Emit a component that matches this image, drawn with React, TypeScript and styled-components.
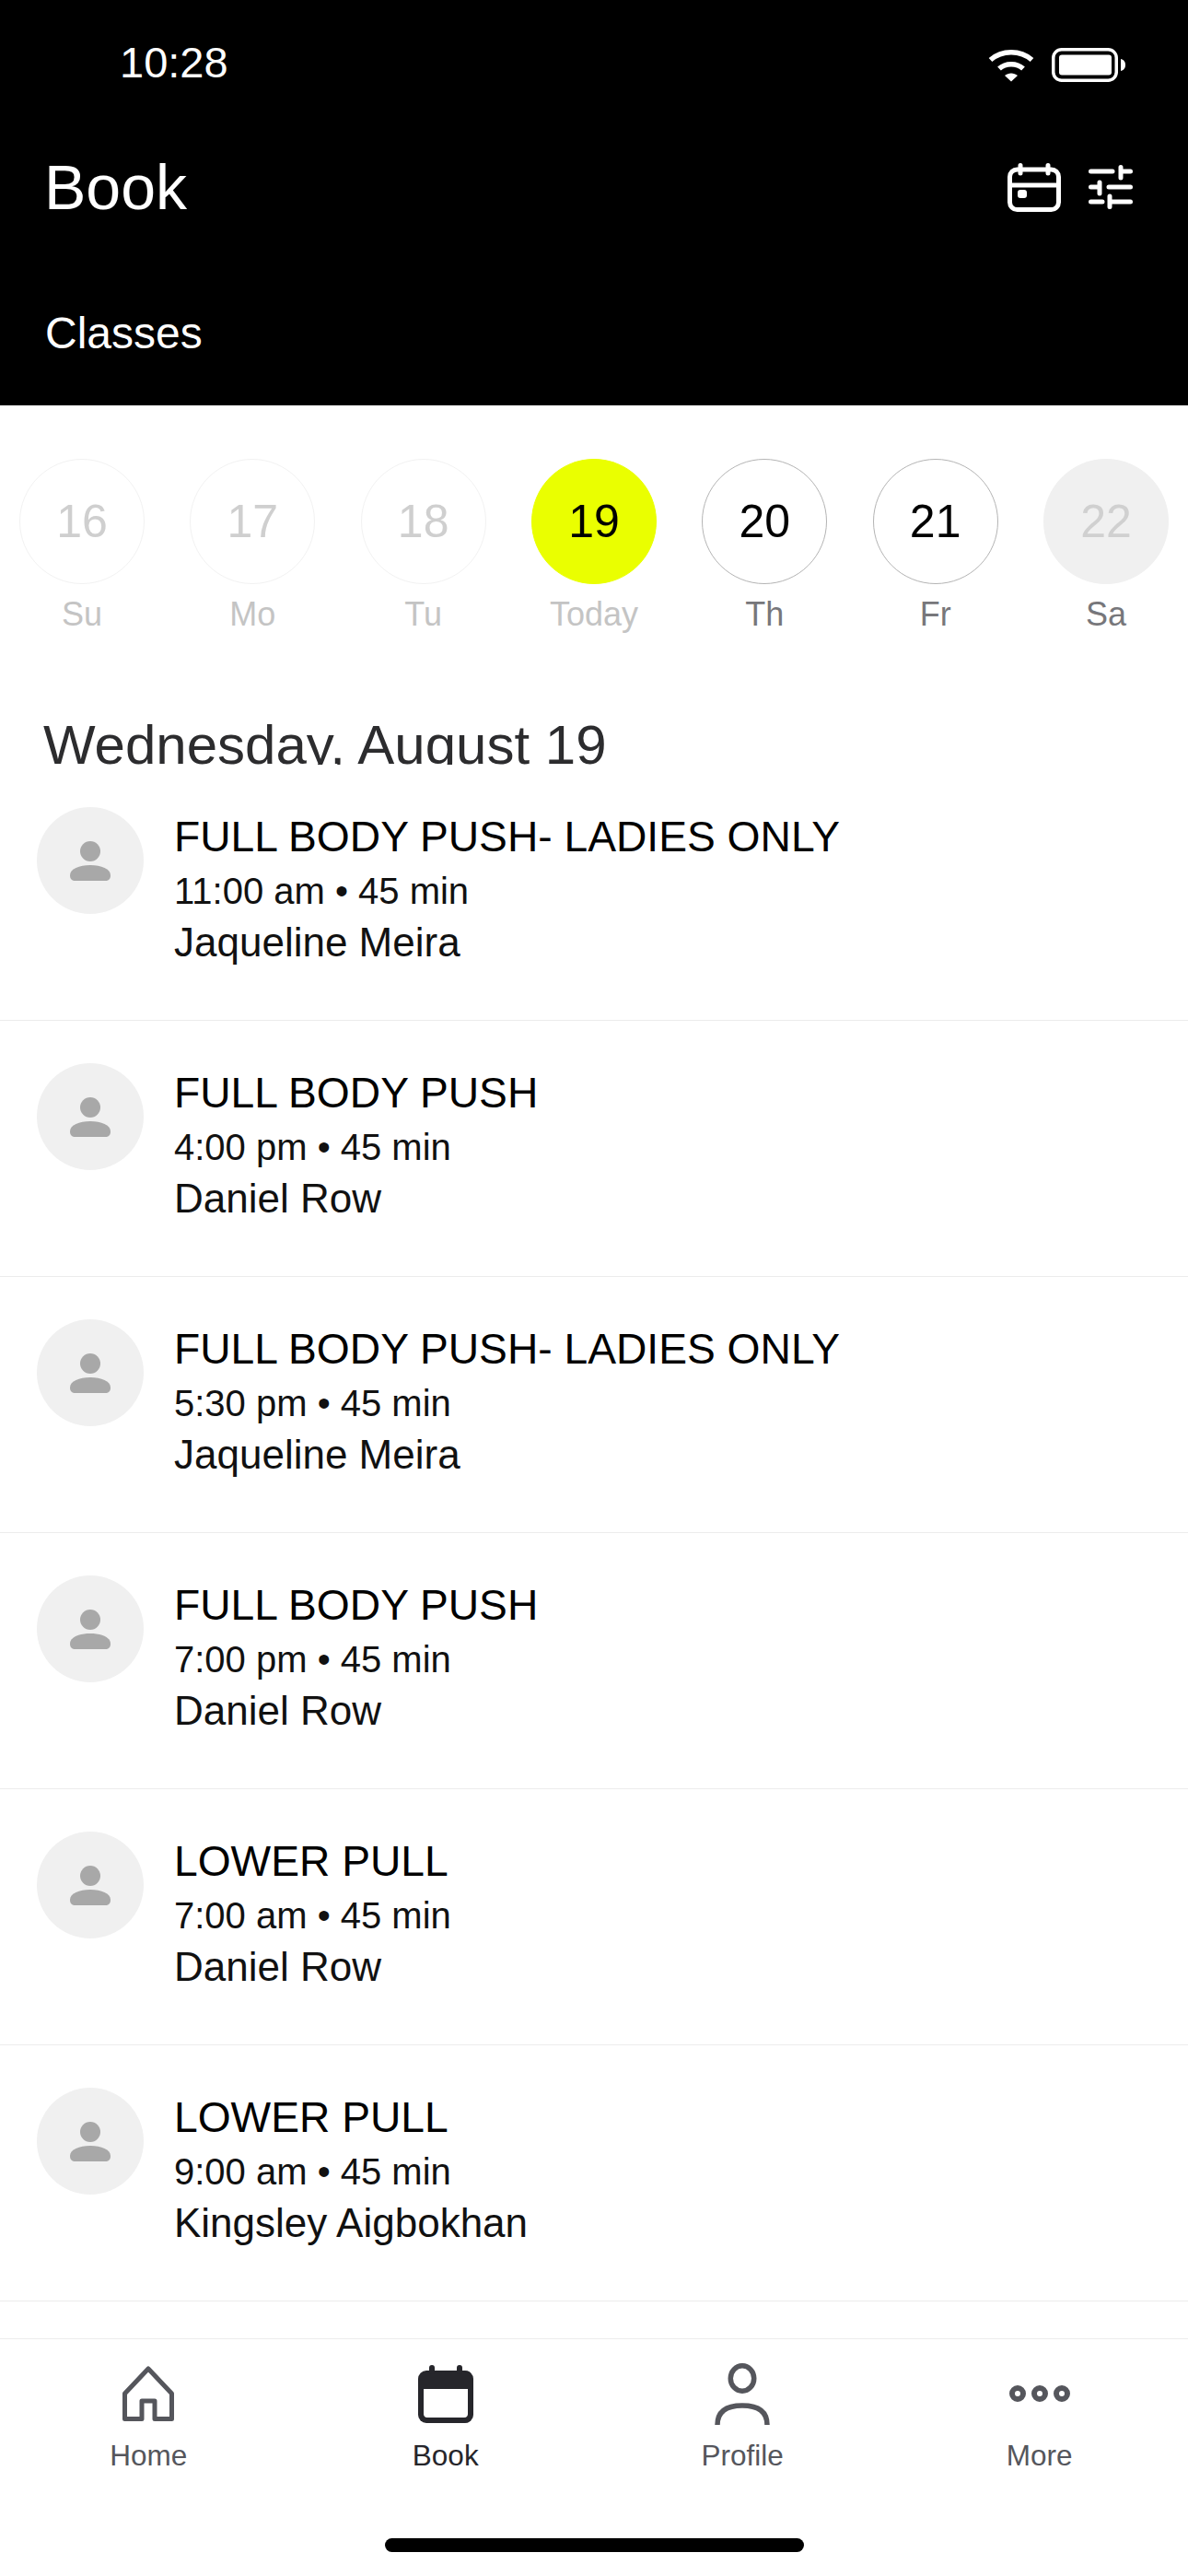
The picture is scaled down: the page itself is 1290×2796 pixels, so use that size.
import { createGlobalStyle, styled } from 'styled-components';

const days = [
  { num: 16, label: 'Su', state: 'past' },
  { num: 17, label: 'Mo', state: 'past' },
  { num: 18, label: 'Tu', state: 'past' },
  { num: 19, label: 'Today', state: 'today' },
  { num: 20, label: 'Th', state: 'open' },
  { num: 21, label: 'Fr', state: 'open' },
  { num: 22, label: 'Sa', state: 'closed' },
] as const;

const classes = [
  { title: 'FULL BODY PUSH- LADIES ONLY', time: '11:00 am', coach: 'Jaqueline Meira' },
  { title: 'FULL BODY PUSH', time: '4:00 pm', coach: 'Daniel Row' },
  { title: 'FULL BODY PUSH- LADIES ONLY', time: '5:30 pm', coach: 'Jaqueline Meira' },
  { title: 'FULL BODY PUSH', time: '7:00 pm', coach: 'Daniel Row' },
  { title: 'LOWER PULL', time: '7:00 am', coach: 'Daniel Row' },
  { title: 'LOWER PULL', time: '9:00 am', coach: 'Kingsley Aigbokhan' },
];

type DayState = (typeof days)[number]['state'];

const WifiIcon = () => (
  <svg width="50" height="36" viewBox="0 0 50 36" fill="none" stroke="#fff" strokeWidth="5.5">
    <path d="M2.5 12C15 1 35 1 47.5 12" />
    <path d="M12 21.5C19 15 31 15 38 21.5" />
    <path d="M18 29C22 25.5 28 25.5 32 29L25 35.5Z" fill="#fff" stroke="none" />
  </svg>
);

const BatteryIcon = () => (
  <svg width="80" height="37" viewBox="0 0 80 37">
    <rect x="1.75" y="1.75" width="68.5" height="33.5" rx="9" fill="none" stroke="#fff" strokeWidth="3.5" />
    <rect x="8" y="7.5" width="57" height="22" rx="3" fill="#fff" />
    <path d="M75 12C79 13 80 16 80 18.5C80 21 79 24 75 25Z" fill="#fff" />
  </svg>
);

const CalendarIcon = () => (
  <svg width="58" height="53" viewBox="0 0 58 53" fill="none" stroke="#fff" strokeWidth="5" strokeLinecap="round">
    <rect x="2.5" y="7" width="53" height="43.5" rx="8" />
    <path d="M2.5 24H55.5M14 2.5V11M44 2.5V11" />
    <rect x="11" y="29" width="10" height="9" rx="3" fill="#fff" stroke="none" />
  </svg>
);

const SlidersIcon = () => (
  <svg width="48" height="48" viewBox="0 0 48 48" fill="none" stroke="#fff" strokeWidth="5" strokeLinecap="round">
    <path d="M2.5 7H26M35 7H45.5M35 2.5V14" />
    <path d="M2.5 24H12M22 24H45.5M12 19V31" />
    <path d="M2.5 40H15M23 40H45.5M23 34V45.5" />
  </svg>
);

const PersonGlyph = () => (
  <svg width="44" height="43" viewBox="0 0 44 43" fill="#a8a8a8">
    <circle cx="22" cy="11" r="11" />
    <path d="M0 37C0 30 10 26 22 26C34 26 44 30 44 37C44 41 42 43 38 43H6C2 43 0 41 0 37Z" />
  </svg>
);

const HomeIcon = () => (
  <svg width="56" height="60" viewBox="0 0 56 60" fill="none" stroke="#55565c" strokeWidth="5" strokeLinejoin="round">
    <path d="M28 3L53.5 30V57.5H35V38H21V57.5H2.5V30Z" />
  </svg>
);

const BookIcon = () => (
  <svg width="60" height="63" viewBox="0 0 60 63">
    <rect x="0" y="6" width="60" height="57" rx="9" fill="#26262b" />
    <path d="M6 26H54V53C54 55 53 57 50 57H10C7 57 6 55 6 53Z" fill="#fff" />
    <rect x="12" y="0" width="6" height="10" rx="3" fill="#26262b" />
    <rect x="42" y="0" width="6" height="10" rx="3" fill="#26262b" />
  </svg>
);

const ProfileIcon = () => (
  <svg width="60" height="67" viewBox="0 0 60 67" fill="none" stroke="#55565c" strokeWidth="5.5">
    <ellipse cx="30" cy="16.5" rx="12.75" ry="13.75" />
    <path d="M3 67C3 52 13 46 30 46C47 46 57 52 57 67" />
  </svg>
);

const MoreIcon = () => (
  <svg width="66" height="20" viewBox="0 0 66 20" fill="none" stroke="#55565c" strokeWidth="6">
    <circle cx="9" cy="10" r="6" />
    <circle cx="33" cy="10" r="6" />
    <circle cx="57" cy="10" r="6" />
  </svg>
);

export default function App() {
  return (
    <>
      <GlobalStyle />
      <Screen>
        <Header>
          <StatusBar>
            <Clock>10:28</Clock>
            <StatusIcons>
              <WifiIcon />
              <BatteryIcon />
            </StatusIcons>
          </StatusBar>
          <TitleRow>
            <PageTitle>Book</PageTitle>
            <HeaderActions>
              <CalendarIcon />
              <SlidersIcon />
            </HeaderActions>
          </TitleRow>
          <SectionLabel>Classes</SectionLabel>
        </Header>

        <DayStrip>
          {days.map((day) => (
            <Day key={day.num}>
              <DayCircle $state={day.state}>{day.num}</DayCircle>
              <DayLabel $state={day.state}>{day.label}</DayLabel>
            </Day>
          ))}
        </DayStrip>

        <DateHeading>Wednesday, August 19</DateHeading>

        <ClassList>
          {classes.map((item) => (
            <ClassRow key={item.title + item.time}>
              <Avatar>
                <PersonGlyph />
              </Avatar>
              <ClassInfo>
                <ClassTitle>{item.title}</ClassTitle>
                <ClassTime>{item.time} • 45 min</ClassTime>
                <ClassCoach>{item.coach}</ClassCoach>
              </ClassInfo>
            </ClassRow>
          ))}
        </ClassList>

        <TabBar>
          <Tab>
            <TabIcon><HomeIcon /></TabIcon>
            <TabLabel>Home</TabLabel>
          </Tab>
          <Tab>
            <TabIcon><BookIcon /></TabIcon>
            <TabLabel $active>Book</TabLabel>
          </Tab>
          <Tab>
            <TabIcon><ProfileIcon /></TabIcon>
            <TabLabel>Profile</TabLabel>
          </Tab>
          <Tab>
            <TabIcon><MoreIcon /></TabIcon>
            <TabLabel>More</TabLabel>
          </Tab>
        </TabBar>
        <HomeBar />
      </Screen>
    </>
  );
}

const GlobalStyle = createGlobalStyle`
  * {
    box-sizing: border-box;
  }

  body {
    margin: 0;
    background: #fff;
    font-family: 'Liberation Sans', Arial, sans-serif;
  }
`;

const Screen = styled.div`
  width: 1290px;
  height: 2796px;
  overflow: hidden;
  display: flex;
  flex-direction: column;
  background: #fff;
`;

const Header = styled.header`
  height: 440px;
  background: #000;
  color: #fff;
  display: flex;
  flex-direction: column;
`;

const StatusBar = styled.div`
  height: 134px;
  padding: 0 68px 0 130px;
  display: flex;
  align-items: center;
  justify-content: space-between;
`;

const Clock = styled.span`
  font-size: 47px;
  line-height: 1;
`;

const StatusIcons = styled.div`
  padding-top: 7px;
  display: flex;
  align-items: center;
  gap: 19px;
`;

const TitleRow = styled.div`
  height: 68px;
  margin-top: 35px;
  padding: 0 60px 0 48px;
  display: flex;
  align-items: center;
  justify-content: space-between;
`;

const PageTitle = styled.h1`
  margin: 0;
  font-size: 68px;
  font-weight: 400;
  line-height: 1;
`;

const HeaderActions = styled.div`
  display: flex;
  align-items: center;
  gap: 30px;
`;

const SectionLabel = styled.div`
  margin-top: 101px;
  padding-left: 49px;
  font-size: 48px;
  line-height: 1;
`;

const DayStrip = styled.div`
  display: grid;
  grid-template-columns: repeat(7, 136px);
  justify-content: space-between;
  padding: 58px 21px 0;
`;

const Day = styled.div`
  display: flex;
  flex-direction: column;
  align-items: center;
  gap: 11px;
`;

const circleStyles: Record<DayState, string> = {
  past: 'background: #fff; border: 1px solid #f2f2f2; color: #cfcfcf;',
  today: 'background: #eaff00; border: 1px solid #eaff00; color: #000;',
  open: 'background: #fff; border: 1px solid #b4b4b4; color: #000;',
  closed: 'background: #f0f0f0; border: 1px solid #f0f0f0; color: #d0d0d0;',
};

const DayCircle = styled.div<{ $state: DayState }>`
  width: 136px;
  height: 136px;
  border-radius: 50%;
  display: flex;
  align-items: center;
  justify-content: center;
  font-size: 50px;
  ${(props) => circleStyles[props.$state]}
`;

const DayLabel = styled.div<{ $state: DayState }>`
  font-size: 36px;
  line-height: 44px;
  color: ${(props) => (props.$state === 'open' || props.$state === 'closed' ? '#77777b' : '#c4c4c4')};
`;

const DateHeading = styled.h2`
  height: 56px;
  margin: 85px 0 0;
  padding-left: 47px;
  overflow: hidden;
  font-size: 60px;
  font-weight: 400;
  line-height: 70px;
  color: #2c2c2e;
`;

const ClassList = styled.div`
  flex: 1;
  min-height: 0;
  overflow: hidden;
`;

const ClassRow = styled.div`
  height: 278px;
  padding: 46px 40px 0;
  display: flex;
  gap: 33px;
  border-bottom: 1px solid #ececec;
`;

const Avatar = styled.div`
  width: 116px;
  height: 116px;
  border-radius: 50%;
  background: #f0f0f0;
  display: flex;
  align-items: center;
  justify-content: center;
  flex-shrink: 0;
`;

const ClassInfo = styled.div`
  display: flex;
  flex-direction: column;
`;

const ClassTitle = styled.div`
  font-size: 46.2px;
  line-height: 64px;
  color: #000;
`;

const ClassTime = styled.div`
  font-size: 40px;
  line-height: 55px;
  color: #111;
`;

const ClassCoach = styled.div`
  font-size: 44px;
  line-height: 55px;
  color: #111;
`;

const TabBar = styled.nav`
  height: 178px;
  border-top: 1px solid #ececec;
  display: grid;
  grid-template-columns: repeat(4, 1fr);
  flex-shrink: 0;
`;

const Tab = styled.div`
  display: flex;
  flex-direction: column;
  align-items: center;
  padding-top: 24px;
`;

const TabIcon = styled.div`
  height: 70px;
  display: flex;
  align-items: center;
  justify-content: center;
`;

const TabLabel = styled.span<{ $active?: boolean }>`
  margin-top: 13px;
  font-size: 31.5px;
  line-height: 38px;
  color: ${(props) => (props.$active ? '#26262b' : '#55565c')};
`;

const HomeBar = styled.div`
  width: 455px;
  height: 15px;
  margin: 39px auto 26px;
  border-radius: 8px;
  background: #000;
  flex-shrink: 0;
`;
